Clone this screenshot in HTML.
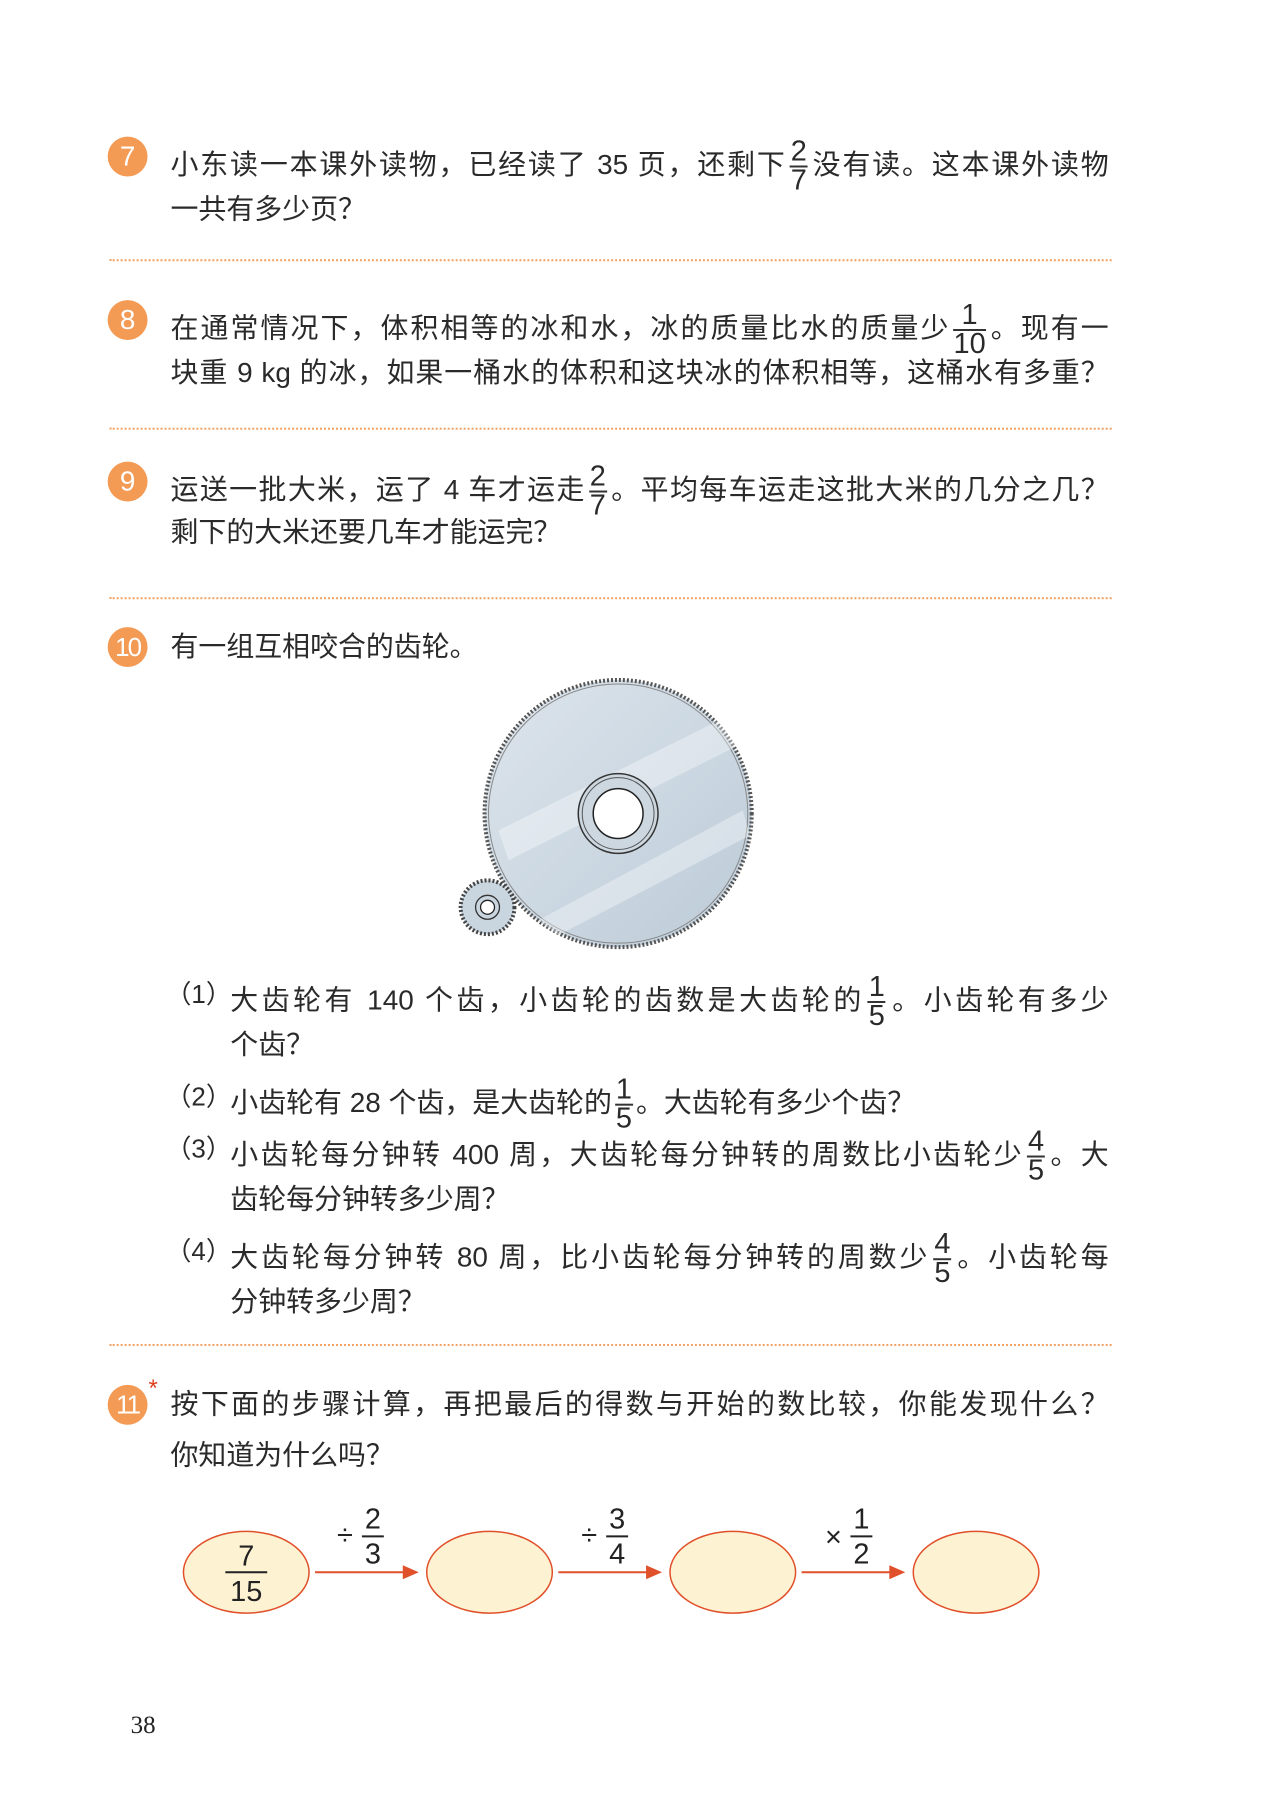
<!DOCTYPE html>
<html><head><meta charset="utf-8"><style>
body{margin:0;background:#fff;}
#o{position:relative;width:1273px;height:1800px;overflow:hidden;}
#p{position:relative;width:1273px;height:1800px;transform:scale(0.997);transform-origin:0 0;font-family:"Liberation Sans","Noto Sans CJK SC",sans-serif;color:#2a2a2a;}
.l{position:absolute;height:40px;line-height:40px;font-size:28px;white-space:nowrap;}
.j{text-align:justify;text-align-last:justify;}
.n{position:absolute;width:40px;height:40px;border-radius:50%;background:#f39a55;color:#fff;font-size:28px;line-height:40px;text-align:center;font-family:"Liberation Sans",sans-serif;}
.d{position:absolute;left:110px;width:1005px;border-top:2px dotted #f2a060;height:0;}
.f{display:inline-block;vertical-align:middle;text-align:center;font-size:29px;line-height:27px;margin:0 3px;text-align-last:center;}
.f span{display:block;}
.f span:first-child{border-bottom:2px solid #333;padding:0 1px;}
</style></head><body><div id="o"><div id="p">

<div class="n" style="left:108px;top:137px">7</div>
<div class="l j" style="left:171px;top:139px;width:941px">小东读一本课外读物，已经读了 35 页，还剩下<span class="f"><span>2</span><span>7</span></span>没有读。这本课外读物</div>
<div class="l" style="left:171px;top:190px">一共有多少页？</div>
<div class="d" style="top:260px"></div>

<div class="n" style="left:108px;top:301px">8</div>
<div class="l j" style="left:171px;top:303px;width:941px">在通常情况下，体积相等的冰和水，冰的质量比水的质量少<span class="f"><span>1</span><span>10</span></span>。现有一</div>
<div class="l j" style="left:171px;top:354px;width:941px">块重 9 kg 的冰，如果一桶水的体积和这块冰的体积相等，这桶水有多重？</div>
<div class="d" style="top:429px"></div>

<div class="n" style="left:108px;top:463px">9</div>
<div class="l j" style="left:171px;top:465px;width:941px">运送一批大米，运了 4 车才运走<span class="f"><span>2</span><span>7</span></span>。平均每车运走这批大米的几分之几？</div>
<div class="l" style="left:171px;top:514px">剩下的大米还要几车才能运完？</div>
<div class="d" style="top:599px"></div>

<div class="n" style="left:108px;top:629px;font-size:26px;letter-spacing:-2px">10</div>
<div class="l" style="left:171px;top:629px">有一组互相咬合的齿轮。</div>

<svg style="position:absolute;left:450px;top:673px" width="340" height="300" viewBox="450 670 340 300">
<defs><linearGradient id="g" x1="0" y1="0" x2="1" y2="1"><stop offset="0" stop-color="#dde5ec"/><stop offset="1" stop-color="#bccbd8"/></linearGradient></defs>
<circle cx="620" cy="813" r="134" fill="url(#g)" stroke="#555" stroke-width="4" stroke-dasharray="2 2"/>
<circle cx="620" cy="813" r="130" fill="none" stroke="#888" stroke-width="1"/>
<path d="M500 830 L720 720 L740 745 L510 860Z" fill="#fff" opacity=".35"/>
<path d="M540 920 L745 810 L752 835 L560 935Z" fill="#fff" opacity=".35"/>
<circle cx="620" cy="813" r="40" fill="#ccd7e0" stroke="#333" stroke-width="1.5"/>
<circle cx="620" cy="813" r="36" fill="none" stroke="#555" stroke-width="1"/>
<circle cx="620" cy="813" r="25" fill="#fff" stroke="#222" stroke-width="1.5"/>
<circle cx="489" cy="907" r="27" fill="#c9d5df" stroke="#444" stroke-width="4" stroke-dasharray="2 2"/>
<circle cx="489" cy="907" r="12" fill="none" stroke="#333" stroke-width="1.3"/>
<circle cx="489" cy="907" r="7" fill="#fff" stroke="#222" stroke-width="1.3"/>
</svg>

<div class="l" style="left:166px;top:977px;font-size:26px">（1）</div>
<div class="l j" style="left:231px;top:977px;width:881px">大齿轮有 140 个齿，小齿轮的齿数是大齿轮的<span class="f"><span>1</span><span>5</span></span>。小齿轮有多少</div>
<div class="l" style="left:231px;top:1028px">个齿？</div>
<div class="l" style="left:166px;top:1080px;font-size:26px">（2）</div>
<div class="l" style="left:231px;top:1080px">小齿轮有 28 个齿，是大齿轮的<span class="f"><span>1</span><span>5</span></span>。大齿轮有多少个齿？</div>
<div class="l" style="left:166px;top:1132px;font-size:26px">（3）</div>
<div class="l j" style="left:231px;top:1132px;width:881px">小齿轮每分钟转 400 周，大齿轮每分钟转的周数比小齿轮少<span class="f"><span>4</span><span>5</span></span>。大</div>
<div class="l" style="left:231px;top:1183px">齿轮每分钟转多少周？</div>
<div class="l" style="left:166px;top:1235px;font-size:26px">（4）</div>
<div class="l j" style="left:231px;top:1235px;width:881px">大齿轮每分钟转 80 周，比小齿轮每分钟转的周数少<span class="f"><span>4</span><span>5</span></span>。小齿轮每</div>
<div class="l" style="left:231px;top:1286px">分钟转多少周？</div>
<div class="d" style="top:1348px"></div>

<div class="n" style="left:108px;top:1389px;font-size:26px;letter-spacing:-2px">11</div>
<div style="position:absolute;left:149px;top:1379px;color:#e04020;font-size:24px">*</div>
<div class="l j" style="left:171px;top:1389px;width:941px">按下面的步骤计算，再把最后的得数与开始的数比较，你能发现什么？</div>
<div class="l" style="left:171px;top:1440px">你知道为什么吗？</div>

<svg style="position:absolute;left:0;top:1489px" width="1273" height="140" viewBox="0 1490 1273 140">
<g fill="#fdf2d2" stroke="#e0502a" stroke-width="1.5">
<ellipse cx="247" cy="1578" rx="63" ry="41"/><ellipse cx="491" cy="1578" rx="63" ry="41"/>
<ellipse cx="735" cy="1578" rx="63" ry="41"/><ellipse cx="979" cy="1578" rx="63" ry="41"/>
</g>
<g stroke="#e0502a" stroke-width="2"><line x1="316" y1="1578" x2="408" y2="1578"/><line x1="560" y1="1578" x2="652" y2="1578"/><line x1="804" y1="1578" x2="896" y2="1578"/></g>
<g fill="#e0502a"><path d="M420 1578 L404 1571 L404 1585Z"/><path d="M664 1578 L648 1571 L648 1585Z"/><path d="M908 1578 L892 1571 L892 1585Z"/></g>
<g font-family="Liberation Sans" font-size="29" fill="#222" text-anchor="middle">
<text x="247" y="1571">7</text><line x1="226" y1="1578" x2="268" y2="1578" stroke="#222" stroke-width="2"/><text x="247" y="1607">15</text>
<text x="346" y="1550">÷</text><text x="374" y="1534">2</text><line x1="363" y1="1542" x2="385" y2="1542" stroke="#222" stroke-width="2"/><text x="374" y="1569">3</text>
<text x="591" y="1550">÷</text><text x="619" y="1534">3</text><line x1="608" y1="1542" x2="630" y2="1542" stroke="#222" stroke-width="2"/><text x="619" y="1569">4</text>
<text x="836" y="1552">×</text><text x="864" y="1534">1</text><line x1="853" y1="1542" x2="875" y2="1542" stroke="#222" stroke-width="2"/><text x="864" y="1569">2</text>
</g>
</svg>

<div style="position:absolute;left:131px;top:1717px;font-family:'Liberation Serif',serif;font-size:25px;color:#222">38</div>
</div></div></body></html>
